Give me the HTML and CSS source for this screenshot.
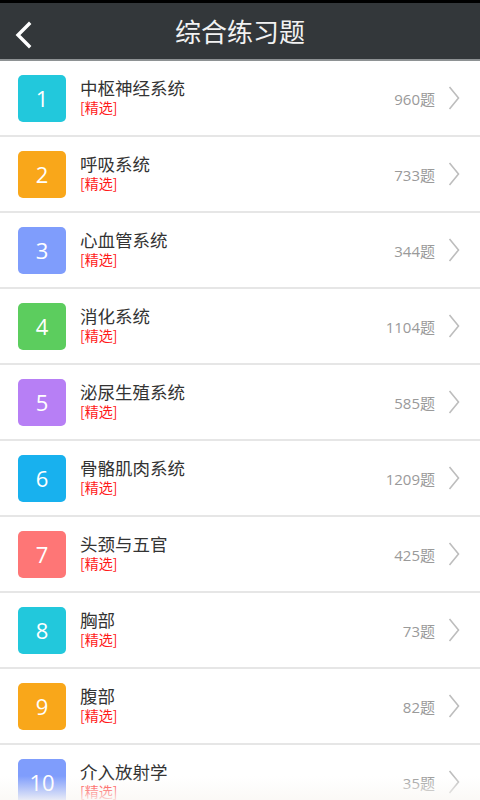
FILE: index.html
```html
<!DOCTYPE html>
<html lang="zh">
<head>
<meta charset="utf-8">
<link rel="stylesheet" href="styles.css">
</head>
<body>
<div class="statusbar"></div>
<header class="topbar">
  <svg class="back" width="20" height="28" viewBox="0 0 20 28"><path d="M15 3 L4 14 L15 25" fill="none" stroke="#fff" stroke-width="3.4" stroke-linecap="square"/></svg>
  <h1 class="title">综合练习题</h1>
</header>
<ul class="list">
  <li class="row"><span class="num c1">1</span><div class="text"><div class="name">中枢神经系统</div><div class="tag">[精选]</div></div><span class="count">960题</span><svg class="chev" width="12" height="24" viewBox="0 0 12 24"><path d="M1.5 1 L10.5 12 L1.5 23" fill="none" stroke="#bdbdbd" stroke-width="1.6"/></svg></li>
  <li class="row"><span class="num c2">2</span><div class="text"><div class="name">呼吸系统</div><div class="tag">[精选]</div></div><span class="count">733题</span><svg class="chev" width="12" height="24" viewBox="0 0 12 24"><path d="M1.5 1 L10.5 12 L1.5 23" fill="none" stroke="#bdbdbd" stroke-width="1.6"/></svg></li>
  <li class="row"><span class="num c3">3</span><div class="text"><div class="name">心血管系统</div><div class="tag">[精选]</div></div><span class="count">344题</span><svg class="chev" width="12" height="24" viewBox="0 0 12 24"><path d="M1.5 1 L10.5 12 L1.5 23" fill="none" stroke="#bdbdbd" stroke-width="1.6"/></svg></li>
  <li class="row"><span class="num c4">4</span><div class="text"><div class="name">消化系统</div><div class="tag">[精选]</div></div><span class="count">1104题</span><svg class="chev" width="12" height="24" viewBox="0 0 12 24"><path d="M1.5 1 L10.5 12 L1.5 23" fill="none" stroke="#bdbdbd" stroke-width="1.6"/></svg></li>
  <li class="row"><span class="num c5">5</span><div class="text"><div class="name">泌尿生殖系统</div><div class="tag">[精选]</div></div><span class="count">585题</span><svg class="chev" width="12" height="24" viewBox="0 0 12 24"><path d="M1.5 1 L10.5 12 L1.5 23" fill="none" stroke="#bdbdbd" stroke-width="1.6"/></svg></li>
  <li class="row"><span class="num c6">6</span><div class="text"><div class="name">骨骼肌肉系统</div><div class="tag">[精选]</div></div><span class="count">1209题</span><svg class="chev" width="12" height="24" viewBox="0 0 12 24"><path d="M1.5 1 L10.5 12 L1.5 23" fill="none" stroke="#bdbdbd" stroke-width="1.6"/></svg></li>
  <li class="row"><span class="num c7">7</span><div class="text"><div class="name">头颈与五官</div><div class="tag">[精选]</div></div><span class="count">425题</span><svg class="chev" width="12" height="24" viewBox="0 0 12 24"><path d="M1.5 1 L10.5 12 L1.5 23" fill="none" stroke="#bdbdbd" stroke-width="1.6"/></svg></li>
  <li class="row"><span class="num c1">8</span><div class="text"><div class="name">胸部</div><div class="tag">[精选]</div></div><span class="count">73题</span><svg class="chev" width="12" height="24" viewBox="0 0 12 24"><path d="M1.5 1 L10.5 12 L1.5 23" fill="none" stroke="#bdbdbd" stroke-width="1.6"/></svg></li>
  <li class="row"><span class="num c2">9</span><div class="text"><div class="name">腹部</div><div class="tag">[精选]</div></div><span class="count">82题</span><svg class="chev" width="12" height="24" viewBox="0 0 12 24"><path d="M1.5 1 L10.5 12 L1.5 23" fill="none" stroke="#bdbdbd" stroke-width="1.6"/></svg></li>
  <li class="row"><span class="num c3">10</span><div class="text"><div class="name">介入放射学</div><div class="tag">[精选]</div></div><span class="count">35题</span><svg class="chev" width="12" height="24" viewBox="0 0 12 24"><path d="M1.5 1 L10.5 12 L1.5 23" fill="none" stroke="#bdbdbd" stroke-width="1.6"/></svg></li>
</ul>
<div class="fade"></div>
</body>
</html>
```

FILE: styles.css
```css
* { box-sizing: border-box; }
html, body { margin: 0; padding: 0; }
body {
  width: 480px;
  height: 800px;
  overflow: hidden;
  background: #fff;
  font-family: "Noto Sans", "Noto Sans CJK SC", sans-serif;
  position: relative;
}
.statusbar { height: 3px; background: #000; }
.topbar {
  height: 58px;
  background: #33373a;
  border-bottom: 2px solid #8e9294;
  display: flex;
  align-items: center;
  justify-content: center;
  position: relative;
}
.back { position: absolute; left: 14px; top: 18px; }
.title {
  margin: 0;
  font-family: "Noto Sans CJK SC", sans-serif;
  font-weight: 400;
  font-size: 26px;
  color: #f2f2f2;
  line-height: 1;
}
.list { list-style: none; margin: 0; padding: 0; }
.row {
  height: 76px;
  border-bottom: 2px solid #e6e6e6;
  display: flex;
  align-items: center;
  padding: 0 20px 0 18px;
}
.num {
  width: 48px;
  height: 47px;
  border-radius: 5px;
  color: #fff;
  font-family: "Open Sans", sans-serif;
  font-size: 22px;
  display: flex;
  align-items: center;
  justify-content: center;
  flex-shrink: 0;
}
.c1 { background: #22c8dc; }
.c2 { background: #f9a71a; }
.c3 { background: #7f9dfc; }
.c4 { background: #5ccd5e; }
.c5 { background: #b77ff5; }
.c6 { background: #18b1ee; }
.c7 { background: #fe7676; }
.text {
  flex: 1;
  margin-left: 14px;
  padding-bottom: 3px;
  font-family: "Noto Sans CJK SC", sans-serif;
  display: flex;
  flex-direction: column;
}
.name { font-size: 17.5px; line-height: 20px; color: #333; }
.tag { font-size: 14px; line-height: 18px; color: #ff1a1a; }
.count {
  font-family: "Open Sans", "Noto Sans CJK SC", sans-serif;
  font-size: 15px;
  color: #9a9a9a;
  margin-right: 13px;
}
.chev { flex-shrink: 0; }
.fade {
  position: absolute;
  left: 0; right: 0; bottom: 0;
  height: 24px;
  background: linear-gradient(to bottom, rgba(255,255,255,0), rgba(250,248,245,0.85));
}
```
